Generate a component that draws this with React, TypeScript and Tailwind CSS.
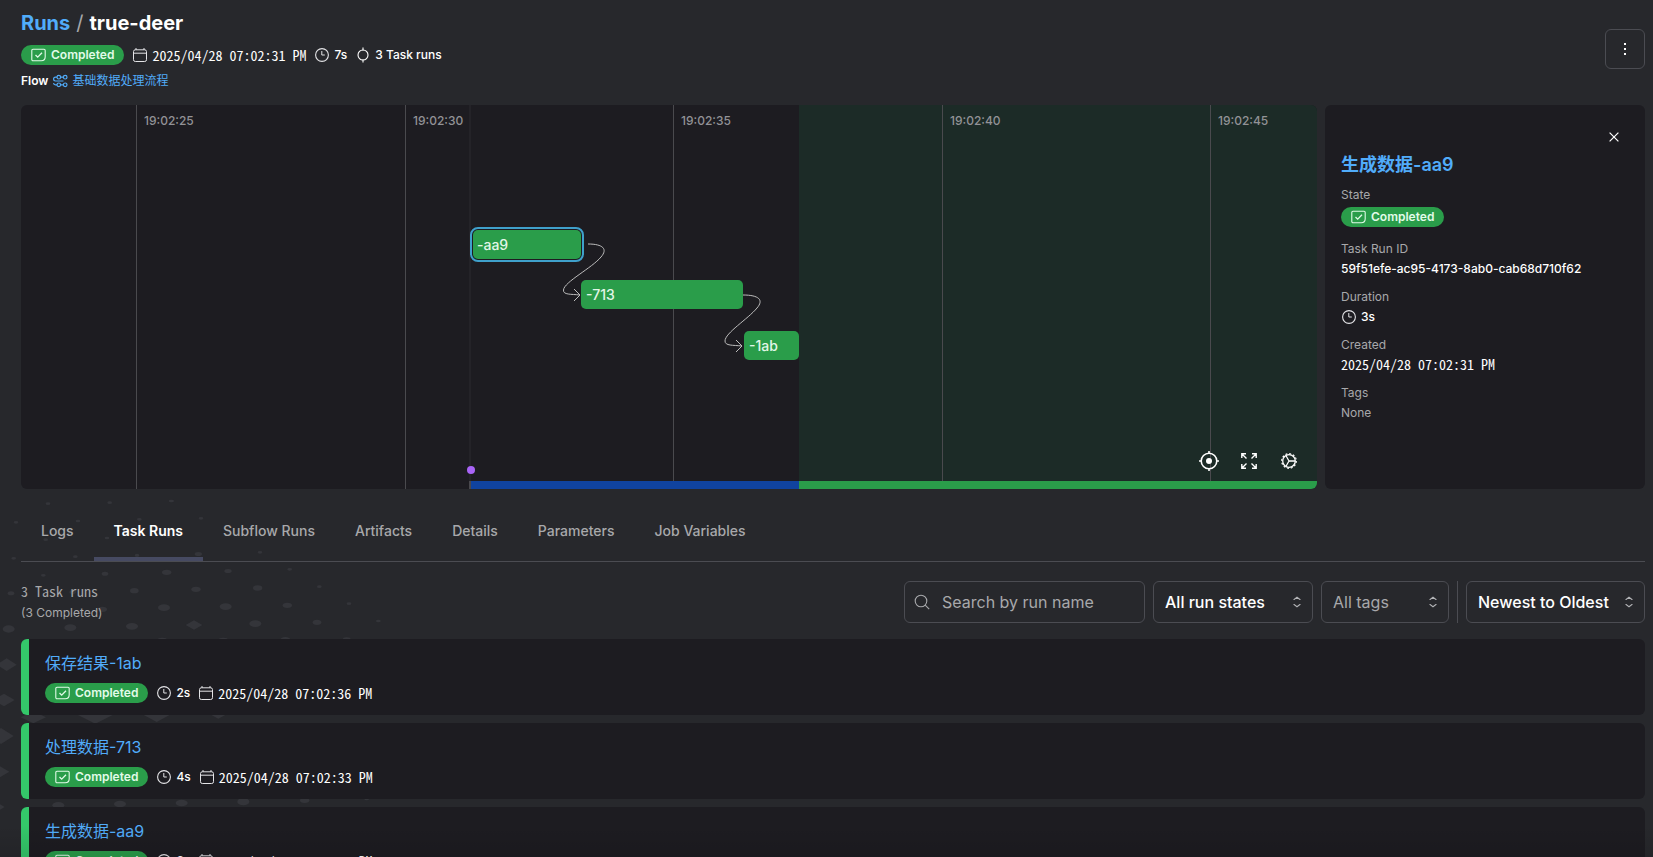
import type { ReactNode } from "react";

const PX_PER_SECOND = 53.7;
const GRAPH_OFFSET = 115;

const marks = [
  { label: "19:02:25", second: 0 },
  { label: "19:02:30", second: 5 },
  { label: "19:02:35", second: 10 },
  { label: "19:02:40", second: 15 },
  { label: "19:02:45", second: 20 },
];

const nodes = [
  { label: "-aa9", left: 452, top: 125, width: 108, selected: true },
  { label: "-713", left: 560, top: 175, width: 162, selected: false },
  { label: "-1ab", left: 723, top: 226, width: 55, selected: false },
];

const tabs = [
  "Logs",
  "Task Runs",
  "Subflow Runs",
  "Artifacts",
  "Details",
  "Parameters",
  "Job Variables",
];

const taskRuns = [
  { name: "保存结果-1ab", duration: "2s", date: "2025/04/28 07:02:36 PM" },
  { name: "处理数据-713", duration: "4s", date: "2025/04/28 07:02:33 PM" },
  { name: "生成数据-aa9", duration: "3s", date: "2025/04/28 07:02:31 PM" },
];

// x, y, rx, ry
const dots = [
  [144, 71, 7, 4], [329, 68, 7, 4], [514, 63, 8, 4],
  [48, 127, 7, 4], [234, 123, 7, 4], [418, 118, 7, 4], [603, 115, 7, 4],
  [137, 179, 7, 4], [321, 174, 7, 4], [506, 170, 7, 4],
  [41, 235, 7, 4], [226, 230, 7, 4], [411, 226, 7, 5], [595, 222, 11, 6], [780, 217, 7, 4],
  [130, 286, 7, 4], [315, 281, 10, 6], [500, 277, 14, 8], [684, 273, 11, 6], [869, 268, 7, 4],
  [33, 340, 10, 6], [218, 336, 10, 6], [403, 332, 13, 8], [588, 328, 14, 8], [773, 324, 14, 8], [958, 320, 7, 4],
  [307, 388, 14, 8], [492, 383, 18, 10], [677, 380, 18, 10], [862, 376, 14, 8], [1047, 371, 7, 4],
  [26, 447, 18, 11], [211, 443, 18, 10], [396, 439, 18, 10], [766, 431, 18, 10], [951, 427, 13, 8], [1135, 423, 7, 4],
  [487, 480, 14, 7], [670, 480, 14, 7], [856, 480, 16, 9], [1040, 478, 12, 6],
  [175, 976, 18, 10], [360, 972, 18, 10], [545, 969, 18, 10], [730, 965, 18, 11], [914, 961, 14, 8], [1100, 957, 7, 4],
];

const diamonds = [
  [582, 435, 25, 14], [20, 554, 30, 19], [12, 660, 32, 19], [3, 768, 38, 24], [-4, 875, 32, 19], [-4, 981, 18, 11],
  [100, 712, 38, 18], [286, 705, 52, 26], [470, 704, 40, 22], [655, 704, 22, 12],
];

function Background() {
  return (
    <svg
      className="absolute left-0 top-[480px] -z-10 h-[377px] w-[400px]"
      viewBox="0 0 1200 1131"
      fill="#34353a"
      aria-hidden="true"
    >
      {dots.map(([x, y, rx, ry]) => (
        <ellipse key={`${x}-${y}`} cx={x} cy={y} rx={rx} ry={ry} />
      ))}
      {diamonds.map(([x, y, rx, ry]) => (
        <path
          key={`${x}-${y}`}
          d={`M${x - rx} ${y}L${x} ${y - ry}L${x + rx} ${y}L${x} ${y + ry}Z`}
        />
      ))}
    </svg>
  );
}

function CalendarIcon() {
  return (
    <svg className="size-4 shrink-0" viewBox="0 0 16 16" fill="none" stroke="#e4e4e7">
      <rect x="1.5" y="2.8" width="13" height="11.7" rx="1.8" />
      <path d="M1.5 6.2h13M4 1v2M12 1v2" />
    </svg>
  );
}

function ClockIcon() {
  return (
    <svg className="size-4 shrink-0" viewBox="0 0 16 16" fill="none" stroke="#e4e4e7">
      <circle cx="8" cy="8" r="6.4" strokeWidth="1.1" />
      <path d="M7.8 4v4h3" />
    </svg>
  );
}

function TaskIcon() {
  return (
    <svg className="size-4 shrink-0" viewBox="0 0 16 16" fill="none" stroke="#ffffff" strokeWidth="1.1">
      <circle cx="8" cy="8" r="5" />
      <path d="M8 .5v3M8 12.5v3" />
    </svg>
  );
}

function FlowIcon() {
  return (
    <svg className="size-4 shrink-0" viewBox="0 0 16 16" fill="none" stroke="#51acfa" strokeWidth="1.2">
      <circle cx="6.8" cy="4.2" r="1.8" />
      <circle cx="13.2" cy="4.2" r="1.8" />
      <circle cx="6.8" cy="11.8" r="1.8" />
      <circle cx="13.2" cy="11.8" r="1.8" />
      <path d="M8.600 4.200h2.800M8.600 11.800h2.800M5 4.200H3.500a1.900 1.900 0 0 0 0 3.800h8M5 11.800H3.500A1.900 1.900 0 0 1 1.600 10" />
    </svg>
  );
}

function CompletedBadge() {
  return (
    <span className="flex h-5 w-fit items-center gap-[5px] rounded-full bg-[#2a9d4a] px-2.5 text-xs font-semibold text-[#e2fbe9]">
      <svg className="h-3.5 w-[15px]" viewBox="0 0 15 14" fill="none" stroke="#e2fbe9" strokeWidth="1.1">
        <path d="M2 1.2h11a1.2 1.2 0 0 1 1.2 1.2v6.4c0 2.4-1.6 4-4 4H2a1.2 1.2 0 0 1-1.2-1.2V2.4A1.2 1.2 0 0 1 2 1.2Z" />
        <path d="m4.5 7 2.2 2.2L11 4.8" strokeWidth="1.3" />
      </svg>
      Completed
    </span>
  );
}

function DateText({ children }: { children: ReactNode }) {
  return (
    <span className="block whitespace-nowrap font-['Noto_Sans_Mono_CJK_SC','Liberation_Mono',monospace] text-sm leading-[18px]">
      {children}
    </span>
  );
}

function Chevrons() {
  return (
    <svg
      className="pointer-events-none absolute right-2 top-[13px] size-4"
      viewBox="0 0 16 16"
      fill="none"
      stroke="#b4b5b8"
      strokeWidth="1.1"
    >
      <path d="M5 6V5.500l3-2.300 3 2.300V6M5 10v.5l3 2.300 3-2.300V10" />
    </svg>
  );
}

function Graph() {
  return (
    <section className="relative h-96 min-w-0 flex-1 overflow-hidden rounded-md bg-[#1d1c21]">
      <div className="absolute bottom-0 left-[778px] right-0 top-0 bg-[#1c2b27]" />
      <div className="absolute bottom-0 left-[448px] top-0 w-0.5 bg-[#242328]" />
      {marks.map((mark) => (
        <div
          key={mark.label}
          className="absolute bottom-0 top-0 border-l border-[#4a4a4e] pl-[7px] pt-2 text-xs leading-4 font-medium text-[#929296]"
          style={{ left: Math.round(GRAPH_OFFSET + mark.second * PX_PER_SECOND) }}
        >
          {mark.label}
        </div>
      ))}
      <div className="absolute bottom-0 left-[448px] h-2 w-[330px] border-l-2 border-[#49484d] bg-[#10439f]" />
      <div className="absolute bottom-0 left-[778px] right-0 h-2 bg-[#2a9d4a]" />
      <div className="absolute bottom-[15px] left-[446px] size-2 rounded-full bg-[#a964f7]" />

      <svg
        className="absolute left-0 top-0 h-96 w-[800px]"
        viewBox="0 0 800 384"
        fill="none"
        stroke="#bdbdbd"
        aria-hidden="true"
      >
        <path d="M567 139C582 139 587 144 580 152C571 163 543 177 542.500 185C542 190 550 189 559 190" />
        <path d="m553 184 6 6-6 6" />
        <path d="M722 190C738 190 743 195 736 203C727 214 704 228 704 236C704 241 712 240 721 241" />
        <path d="m715 235 6 6-6 6" />
      </svg>

      {nodes.map((node) => (
        <button
          key={node.label}
          type="button"
          className={
            node.selected
              ? "absolute h-[29px] rounded-[5px] bg-[#2a9d4a] pl-1 text-left text-sm font-medium text-[#e2f6e7] outline-2 outline-offset-1 outline-[#3fa0cb]"
              : "absolute h-[29px] rounded-[5px] bg-[#2a9d4a] pl-[5px] text-left text-sm font-medium text-[#e2f6e7]"
          }
          style={{ left: node.left, top: node.top, width: node.width }}
        >
          {node.label}
        </button>
      ))}

      <div className="absolute bottom-2 right-2 flex">
        <button type="button" aria-label="Center" className="flex size-10 items-center justify-center">
          <svg className="size-5" viewBox="0 0 20 20" fill="none" stroke="#ffffff" strokeWidth="1.6">
            <circle cx="10" cy="10" r="7.800" />
            <circle cx="10" cy="10" r="3" fill="#ffffff" stroke="none" />
            <path d="M10 0v3M10 17v3M0 10h3M17 10h3" />
          </svg>
        </button>
        <button type="button" aria-label="Fullscreen" className="flex size-10 items-center justify-center">
          <svg className="size-4" viewBox="0 0 16 16" fill="none" stroke="#ffffff" strokeWidth="1.4">
            <path d="M.8 5V.8H5M1 1l4.500 4.500M11 .8h4.200V5M15 1l-4.500 4.500M.8 11v4.200H5M1 15l4.500-4.500M11 15.200h4.200V11M15 15l-4.500-4.500" />
          </svg>
        </button>
        <button type="button" aria-label="Settings" className="flex size-10 items-center justify-center">
          <svg className="size-4" viewBox="0 0 16 16" fill="none" stroke="#ffffff" strokeWidth="1.300">
            <circle cx="8" cy="8" r="6.300" />
            <circle cx="8" cy="8" r="7.300" strokeWidth="1.200" strokeDasharray="1.900 1.920" />
            <path d="M8 8h6M8 8 5 2.800M8 8l-3 5.200" />
          </svg>
        </button>
      </div>
    </section>
  );
}

function Field({ label, children }: { label: string; children: ReactNode }) {
  return (
    <div className="text-xs leading-5">
      <dt className="text-[#a8a8ab]">{label}</dt>
      <dd className="font-medium text-white">{children}</dd>
    </div>
  );
}

function SidePanel() {
  return (
    <aside className="w-80 shrink-0 rounded-md bg-[#1d1c21] p-4">
      <div className="flex justify-end">
        <button type="button" aria-label="Close" className="flex h-8 w-[30px] items-center justify-center">
          <svg className="size-2.5" viewBox="0 0 10 10" stroke="#ffffff" strokeWidth="1.2">
            <path d="m.6.6 8.800 8.800M9.400.6.6 9.400" />
          </svg>
        </button>
      </div>
      <a href="#task-run" className="block text-lg leading-6 font-semibold text-[#51acfa]">
        生成数据-aa9
      </a>
      <dl className="mt-2 flex flex-col gap-2">
        <Field label="State">
          <div className="flex h-[26px] items-start pt-0.5">
            <CompletedBadge />
          </div>
        </Field>
        <Field label="Task Run ID">59f51efe-ac95-4173-8ab0-cab68d710f62</Field>
        <Field label="Duration">
          <span className="flex items-center gap-1">
            <ClockIcon />
            3s
          </span>
        </Field>
        <Field label="Created">
          <div className="h-5">
            <DateText>2025/04/28 07:02:31 PM</DateText>
          </div>
        </Field>
        <Field label="Tags">
          <span className="font-normal text-[#a8a8ab]">None</span>
        </Field>
      </dl>
    </aside>
  );
}

function Filters() {
  return (
    <div className="mt-[19px] flex items-start justify-between">
      <div className="text-xs text-[#a8a8ab]">
        <p className="font-['Noto_Sans_Mono_CJK_SC','Liberation_Mono',monospace] text-sm leading-5">
          3 Task runs
        </p>
        <p className="leading-6">(3 Completed)</p>
      </div>
      <div className="flex h-[42px] gap-2 text-base">
        <div className="relative">
          <svg
            className="absolute left-2.5 top-[13px] size-4"
            viewBox="0 0 16 16"
            fill="none"
            stroke="#a8a9ac"
            strokeWidth="1.1"
          >
            <circle cx="7" cy="7" r="5.800" />
            <path d="m11.200 11.200 4 4" />
          </svg>
          <input
            type="text"
            aria-label="Search by run name"
            placeholder="Search by run name"
            className="h-full w-[241px] rounded-md border border-[#4b4c52] bg-transparent pl-[37px] pr-3 text-white placeholder:text-[#a8a8ab]"
          />
        </div>
        <div className="relative">
          <select
            aria-label="Run states"
            className="h-full w-40 appearance-none rounded-md border border-[#4b4c52] bg-[#27282c] px-[11px] font-medium text-white"
          >
            <option>All run states</option>
          </select>
          <Chevrons />
        </div>
        <div className="relative">
          <select
            aria-label="Tags"
            className="h-full w-32 appearance-none rounded-md border border-[#4b4c52] bg-[#27282c] px-[11px] text-[#a8a8ab]"
          >
            <option>All tags</option>
          </select>
          <Chevrons />
        </div>
        <div className="w-px bg-[#4b4c52]" />
        <div className="relative">
          <select
            aria-label="Sort order"
            className="h-full w-[179px] appearance-none rounded-md border border-[#4b4c52] bg-[#27282c] px-[11px] font-medium text-white"
          >
            <option>Newest to Oldest</option>
          </select>
          <Chevrons />
        </div>
      </div>
    </div>
  );
}

export default function App() {
  return (
    <div className="relative isolate h-screen overflow-hidden bg-[#27282c] pl-[21px] pr-2 font-[Inter,'Noto_Sans_CJK_SC',sans-serif] text-white">
      <Background />
      <header className="flex items-center justify-between pt-[9px]">
        <div className="flex flex-col gap-2">
          <h1 className="flex gap-1.5 text-xl leading-7 font-bold">
            <a href="#runs" className="text-[#51acfa]">
              Runs
            </a>
            <span className="font-normal text-[#a8a8ab]">/</span>
            <span>true-deer</span>
          </h1>
          <div className="flex h-5 items-center gap-2 text-xs font-medium">
            <CompletedBadge />
            <span className="flex items-center gap-1">
              <CalendarIcon />
              <DateText>2025/04/28 07:02:31 PM</DateText>
            </span>
            <span className="flex items-center gap-1">
              <ClockIcon />
              7s
            </span>
            <span className="flex items-center gap-1">
              <TaskIcon />3 Task runs
            </span>
          </div>
          <div className="flex items-center gap-1 text-xs leading-4 font-semibold">
            Flow
            <a href="#flow" className="flex items-center gap-1 font-normal text-[#51acfa]">
              <FlowIcon />
              基础数据处理流程
            </a>
          </div>
        </div>
        <button
          type="button"
          aria-label="More actions"
          className="flex size-10 items-center justify-center rounded-md border border-[#4b4c52]"
        >
          <svg className="h-3 w-0.5" viewBox="0 0 2 12" fill="#ffffff">
            <path d="M0 0h2v2H0zM0 5h2v2H0zM0 10h2v2H0z" />
          </svg>
        </button>
      </header>

      <div className="mt-4 flex gap-2">
        <Graph />
        <SidePanel />
      </div>

      <nav className="mt-3 flex h-[61px] border-b border-[#4b4c52] text-sm font-medium">
        {tabs.map((tab) => (
          <button
            key={tab}
            type="button"
            className={
              tab === "Task Runs"
                ? "border-b-4 border-[#464a62] px-5 pt-1 font-semibold text-white"
                : "px-5 text-[#a8a8ab]"
            }
          >
            {tab}
          </button>
        ))}
      </nav>

      <Filters />

      <ul className="mt-[14px] flex flex-col gap-2">
        {taskRuns.map((run) => (
          <li
            key={run.name}
            className="overflow-hidden rounded-md bg-[#1d1c21]"
          >
            <div className="flex flex-col gap-2 border-l-8 border-[#34c76a] px-4 py-3">
              <a href="#task-run" className="w-fit text-base leading-6 text-[#51acfa]">
                {run.name}
              </a>
              <div className="flex h-5 items-center gap-2 text-xs font-medium">
                <CompletedBadge />
                <span className="flex items-center gap-1">
                  <ClockIcon />
                  {run.duration}
                </span>
                <span className="flex items-center gap-1">
                  <CalendarIcon />
                  <DateText>{run.date}</DateText>
                </span>
              </div>
            </div>
          </li>
        ))}
      </ul>
      <div className="pointer-events-none absolute inset-x-0 bottom-0 h-8 bg-linear-to-b from-transparent to-black/10" />
    </div>
  );
}
